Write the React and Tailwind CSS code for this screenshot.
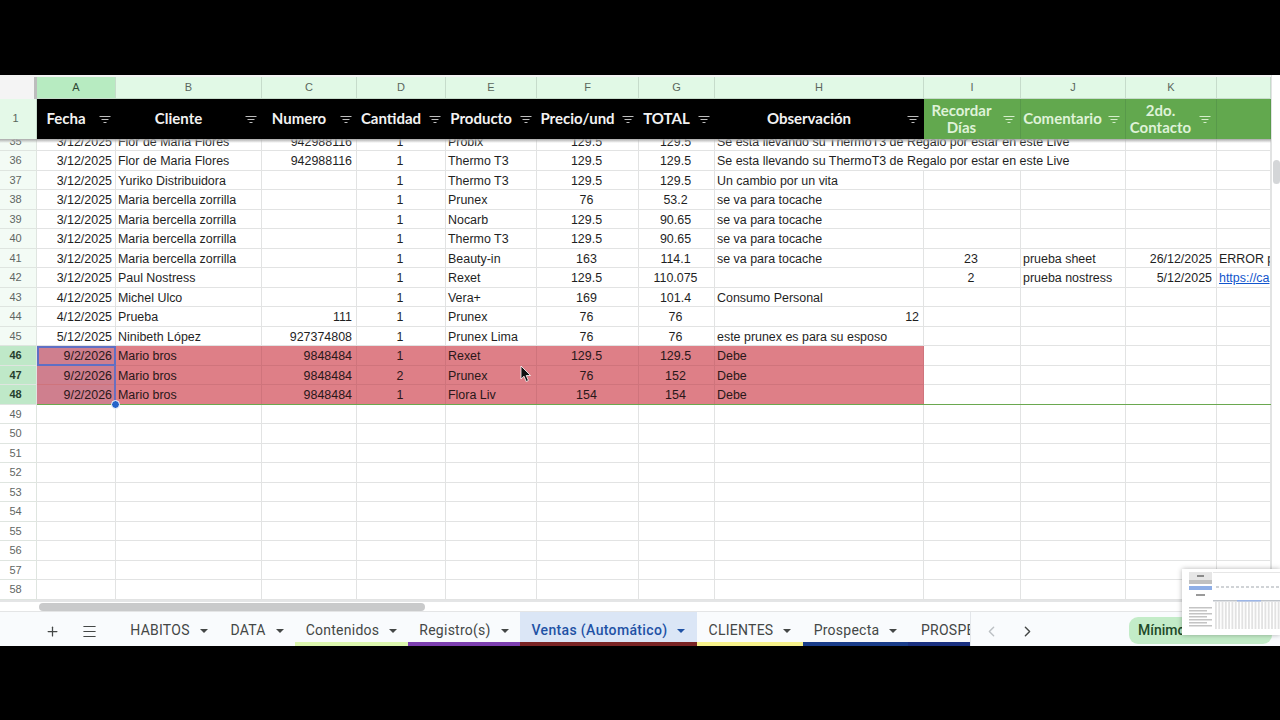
import { ChevronLeft, ChevronRight, Menu, Plus } from 'lucide-react';

const cols = [
  { w: 'w-[79px]', align: 'text-right' },
  { w: 'w-[146px]', align: 'text-left' },
  { w: 'w-[95px]', align: 'text-right' },
  { w: 'w-[89px]', align: 'text-center' },
  { w: 'w-[91px]', align: 'text-left' },
  { w: 'w-[102px]', align: 'text-center' },
  { w: 'w-[76px]', align: 'text-center' },
  { w: 'w-[209px]', align: 'text-left' },
  { w: 'w-[97px]', align: 'text-center' },
  { w: 'w-[105px]', align: 'text-left' },
  { w: 'w-[91px]', align: 'text-right' },
  { w: 'w-[54px]', align: 'text-left' },
];

const letters = ['A', 'B', 'C', 'D', 'E', 'F', 'G', 'H', 'I', 'J', 'K', ''];

const heads = [
  'Fecha', 'Cliente', 'Numero', 'Cantidad', 'Producto', 'Precio/und', 'TOTAL', 'Observación',
  'Recordar Días', 'Comentario', '2do. Contacto', '',
];

const llevando = 'Se esta llevando su ThermoT3 de Regalo por estar en este Live';
const tocache = 'se va para tocache';

const rows = [
  { n: 35, clip: true, spill: true, c: ['3/12/2025', 'Flor de Maria Flores', '942988116', '1', 'Probix', '129.5', '129.5', llevando] },
  { n: 36, spill: true, c: ['3/12/2025', 'Flor de Maria Flores', '942988116', '1', 'Thermo T3', '129.5', '129.5', llevando] },
  { n: 37, c: ['3/12/2025', 'Yuriko Distribuidora', '', '1', 'Thermo T3', '129.5', '129.5', 'Un cambio por un vita'] },
  { n: 38, c: ['3/12/2025', 'Maria bercella zorrilla', '', '1', 'Prunex', '76', '53.2', tocache] },
  { n: 39, c: ['3/12/2025', 'Maria bercella zorrilla', '', '1', 'Nocarb', '129.5', '90.65', tocache] },
  { n: 40, c: ['3/12/2025', 'Maria bercella zorrilla', '', '1', 'Thermo T3', '129.5', '90.65', tocache] },
  { n: 41, c: ['3/12/2025', 'Maria bercella zorrilla', '', '1', 'Beauty-in', '163', '114.1', tocache, '23', 'prueba sheet', '26/12/2025', 'ERROR p'] },
  { n: 42, c: ['3/12/2025', 'Paul Nostress', '', '1', 'Rexet', '129.5', '110.075', '', '2', 'prueba nostress', '5/12/2025', 'https://ca'] },
  { n: 43, c: ['4/12/2025', 'Michel Ulco', '', '1', 'Vera+', '169', '101.4', 'Consumo Personal'] },
  { n: 44, rightH: true, c: ['4/12/2025', 'Prueba', '111', '1', 'Prunex', '76', '76', '12'] },
  { n: 45, c: ['5/12/2025', 'Ninibeth López', '927374808', '1', 'Prunex Lima', '76', '76', 'este prunex es para su esposo'] },
  { n: 46, red: true, c: ['9/2/2026', 'Mario bros', '9848484', '1', 'Rexet', '129.5', '129.5', 'Debe'] },
  { n: 47, red: true, c: ['9/2/2026', 'Mario bros', '9848484', '2', 'Prunex', '76', '152', 'Debe'] },
  { n: 48, red: true, c: ['9/2/2026', 'Mario bros', '9848484', '1', 'Flora Liv', '154', '154', 'Debe'] },
  ...[49, 50, 51, 52, 53, 54, 55, 56, 57, 58].map((n) => ({ n, c: [] })),
];

const tabs = [
  { name: 'HABITOS', w: 'w-[100px]', line: 'border-transparent' },
  { name: 'DATA', w: 'w-[76px]', line: 'border-transparent' },
  { name: 'Contenidos', w: 'w-[113px]', line: 'border-[#dcf7ae]' },
  { name: 'Registro(s)', w: 'w-[112px]', line: 'border-[#7d3fb0]' },
  { name: 'Ventas (Automático)', w: 'w-[177px]', line: 'border-[#7a2424]', active: true },
  { name: 'CLIENTES', w: 'w-[106px]', line: 'border-[#f7f28a]' },
  { name: 'Prospecta', w: 'w-[105px]', line: 'border-[#1a3d8a]' },
];

function FilterIcon({ color }) {
  return (
    <svg width="12" height="8" viewBox="0 0 12 8" className="shrink-0" stroke={color} strokeWidth="1">
      <path d="M0.5 1.5H11.5M2.5 4.5H9.5M4.5 7.5H7.5" />
    </svg>
  );
}

function Caret({ color = '#444746' }) {
  return (
    <svg width="8" height="4" viewBox="0 0 8 4" className="ml-[10px] shrink-0">
      <path d="M0 0H8L4 4Z" fill={color} />
    </svg>
  );
}

function ColumnHeaders() {
  return (
    <div className="flex h-[24px] border-t-2 border-[#f3f3f3] shrink-0">
      <div className="w-[37px] bg-[#f4f4f4] border-r-[3px] border-[#bdbdbd] shrink-0" />
      {letters.map((l, i) => (
        <div
          key={i}
          className={`${cols[i].w} shrink-0 flex items-center justify-center text-[11px] font-medium border-r border-b border-[#c6dccb] ${i === 0 ? 'bg-[#b7ebc1] text-[#2f4a36]' : 'bg-[#e1f9e6] text-[#5a665c]'}`}
        >
          {l}
        </div>
      ))}
    </div>
  );
}

function TitleRow() {
  return (
    <div className="flex h-[40px] shrink-0 relative z-20">
      <div className="w-[37px] bg-[#e4f9e8] flex items-center justify-center pr-[5px] pb-[2px] text-[11px] font-medium text-[#5a665c] border-r border-[#c6dccb] shrink-0">
        1
      </div>
      {heads.map((h, i) => {
        const green = i > 7;
        return (
          <div
            key={i}
            className={`${cols[i].w} shrink-0 flex items-center pl-[2px] pr-[5px] font-['Lato',sans-serif] font-bold text-[15px] leading-[17px] ${green ? 'bg-[#62a84e] text-[#dff2d8] border-r border-[#58994a]' : 'bg-black text-[#f2f2f2]'}`}
          >
            {h && <span className={`flex-1 text-center mr-[6px] ${h.includes(' ') ? 'mb-[1px]' : 'mb-[2px]'}`}>{h}</span>}
            {h && <FilterIcon color={green ? '#d5eecb' : '#bdbdbd'} />}
          </div>
        );
      })}
    </div>
  );
}

function SheetRow({ row }) {
  return (
    <div className={`flex shrink-0 ${row.clip ? 'h-[12px] items-end overflow-y-hidden' : 'h-[19.5px]'}`}>
      <div
        className={`w-[37px] h-[19.5px] shrink-0 flex items-center justify-center pr-[5px] text-[11px] border-r border-b border-[#dfe5e0] ${row.red ? 'bg-[#bfe8c8] font-bold text-[#27402d]' : row.n > 48 ? 'bg-white text-[#5f6662]' : 'bg-[#f3fbf5] text-[#5f6662]'}`}
      >
        {row.n}
      </div>
      {cols.map((col, i) => {
        const text = row.c[i];
        const red = row.red && i < 8;
        const noRight = row.spill && (i === 7 || i === 8);
        const align = row.rightH && i === 7 ? 'text-right' : col.align;
        return (
          <div
            key={i}
            className={`${col.w} h-[19.5px] shrink-0 pl-[2px] pt-[1px] text-[12.45px] leading-[18px] whitespace-nowrap border-b ${i === 0 ? 'pr-[3px]' : 'pr-[4px]'} ${align} ${noRight ? '' : 'border-r'} ${red ? 'border-[#cf747c] text-[#2a1719]' : 'border-[#e2e3e3] text-[#1f1f1f]'} ${red && i === 0 ? 'bg-[#cf7f8e]' : ''} ${red && i > 0 ? 'bg-[#de7f87]' : ''} ${i === 11 ? 'overflow-hidden' : ''}`}
          >
            {text && text.startsWith('https') ? (
              <span className="text-[#1155cc] underline">{text}</span>
            ) : (
              text
            )}
          </div>
        );
      })}
    </div>
  );
}

function Thumbnail() {
  const stripes = Array.from({ length: 20 }, (_, i) => 33 + i * 3.3);
  const lines = [38, 41, 44, 47, 50, 53, 56];
  const ticks = Array.from({ length: 13 }, (_, i) => 34 + i * 5);
  return (
    <div className="absolute right-0 top-[494px] w-[98px] h-[66px] bg-white shadow-[0_0_5px_rgba(0,0,0,0.3)] z-30">
      <svg width="98" height="66" viewBox="0 0 98 66">
        <rect x="7" y="3" width="23" height="8" fill="#e6e6e6" />
        <rect x="15" y="6" width="7" height="2" fill="#8a8a8a" />
        <rect x="7" y="11" width="23" height="4" fill="#c0c0c0" />
        <rect x="7" y="17" width="23" height="4" fill="#8eaee6" />
        <rect x="14" y="25" width="9" height="2" fill="#9a9a9a" />
        {lines.map((y) => (
          <rect key={y} x="7" y={y} width={y % 2 ? 18 : 23} height="1.5" fill="#c4c4c4" />
        ))}
        <rect x="31" y="3" width="67" height="1" fill="#e6e6e6" />
        {ticks.map((x) => (
          <rect key={x} x={x} y="17" width="3" height="2" fill="#d0d3d6" />
        ))}
        <rect x="31" y="31" width="67" height="1.5" fill="#bfc4ca" />
        <rect x="55" y="31" width="24" height="1.5" fill="#9db6e6" />
        {stripes.map((x) => (
          <rect key={x} x={x} y="33" width="1.8" height="27" fill="#e2e2e2" />
        ))}
      </svg>
    </div>
  );
}

function SheetTabs() {
  return (
    <div className="flex h-[34px] bg-[#f9fbfd] shrink-0 relative">
      <div className="w-[119px] shrink-0 flex items-center pt-[4px] text-[#444746]">
        <Plus size={15} className="ml-[45px]" strokeWidth={2} />
        <Menu size={17} className="ml-[21px]" strokeWidth={1.6} />
      </div>
      {tabs.map((t) => (
        <div
          key={t.name}
          className={`${t.w} shrink-0 flex items-center justify-center pt-[7px] border-b-4 ${t.line} font-['Roboto',sans-serif] text-[14px] ${t.active ? 'bg-[#dbe6f6] text-[#1f52a5] font-medium tracking-[0.35px]' : 'text-[#444746] tracking-[0.25px]'}`}
        >
          {t.name}
          <Caret color={t.active ? '#1f52a5' : '#444746'} />
        </div>
      ))}
      <div className="w-[62px] shrink-0 overflow-hidden border-b-4 border-[#1a3080] pl-[13px] pt-[7px] flex items-center font-['Roboto',sans-serif] text-[14px] tracking-[0.25px] text-[#444746] whitespace-nowrap">
        PROSPECCIÓN
      </div>
      <div className="border-l border-[#e3e6ea] w-[161px] shrink-0 flex items-center pt-[4px]">
        <ChevronLeft size={17} className="ml-[12px] text-[#bcc0c4]" />
        <ChevronRight size={17} className="ml-[19px] text-[#444746]" />
      </div>
      <div className="w-[143px] h-[27px] mt-[5px] rounded-[9px] bg-[#c3ecc8] pl-[9px] flex items-center font-['Roboto',sans-serif] text-[14px] font-medium text-[#1e4a28] shrink-0 absolute left-[1129px]">
        Mínimo
      </div>
    </div>
  );
}

export default function App() {
  return (
    <div className="w-[1280px] h-[720px] bg-black overflow-hidden font-['Liberation_Sans',Arial,sans-serif]">
      <div className="h-[75px]" />
      <div className="h-[571px] bg-white flex flex-col relative overflow-hidden">
        <div className="flex h-[525px] shrink-0">
          <div className="w-[1271px] flex flex-col shrink-0 relative">
            <ColumnHeaders />
            <TitleRow />
            <div className="h-[461px] overflow-hidden relative">
              {rows.map((row) => (
                <SheetRow key={row.n} row={row} />
              ))}
              {/* sombra de la fila congelada */}
              <div className="absolute left-0 right-0 top-0 h-[4px] bg-gradient-to-b from-[#a9a9a9] to-transparent" />
              {/* celda activa y rango */}
              <div className="absolute left-[37px] top-[207px] w-[79px] h-[20px] border-2 border-[#5f6fc4]" />
              <div className="absolute left-[114px] top-[226px] w-[2px] h-[39px] bg-[#6a6fc0]" />
              <div className="absolute left-[37px] right-0 top-[265px] h-[1px] bg-[#6aa84f]" />
              <div className="absolute left-[111px] top-[261px] w-[9px] h-[9px] rounded-full bg-[#2563c9] border border-white" />
            </div>
          </div>
          <div className="w-[9px] shrink-0 border-l border-[#e2e3e3]">
            <div className="w-[7px] h-[24px] mt-[85px] ml-[1px] rounded-[4px] bg-[#d4d6d8]" />
          </div>
        </div>
        <div className="h-[12px] shrink-0 border-t-2 border-b border-[#e4e5e6] bg-white flex items-center">
          <div className="w-[386px] h-[8px] ml-[39px] rounded-full bg-[#c9cacb]" />
        </div>
        <SheetTabs />
        <Thumbnail />
        {/* cursor del ratón */}
        <svg width="12" height="18" viewBox="0 0 12 18" className="absolute left-[520px] top-[290px] z-40">
          <path d="M1 1V14L4 11.2L6.2 16.5L8.4 15.5L6.2 10.5H10.5Z" fill="#111" stroke="#fff" strokeWidth="0.8" />
        </svg>
      </div>
    </div>
  );
}
